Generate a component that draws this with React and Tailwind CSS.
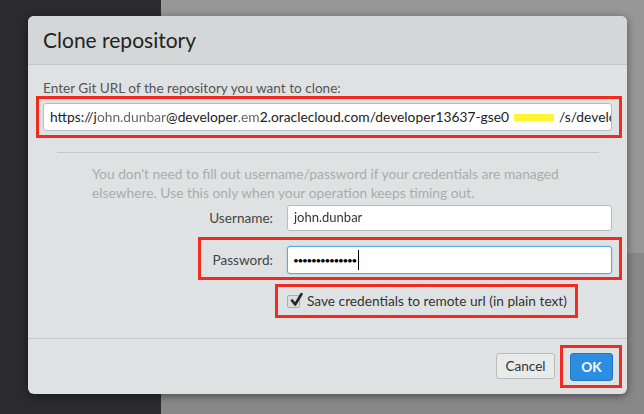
import React from 'react';

const red = 'border-[3px] border-[#f22b20]';

const CheckIcon = () => (
    <svg width="16" height="16" viewBox="0 0 16 16" className="absolute left-[1px] top-[-4px]">
        <path d="M3 8.5 L6.2 12.5 L12.5 2" fill="none" stroke="#262626" strokeWidth="2.6" strokeLinecap="round" strokeLinejoin="round" />
    </svg>
);

export default function App() {
    return (
        <div className="relative w-[644px] h-[414px] overflow-hidden flex text-[#333]" style={{ fontFamily: 'Lato, "Open Sans", sans-serif' }}>
            <div className="w-[161px] h-full bg-[#2b2b2d]" />
            <div className="flex-1 flex flex-col">
                <div className="h-[253px] bg-[#979797]" />
                <div className="flex-1 bg-[#888888]" />
            </div>

            <div className="absolute left-[28px] top-[16px] w-[599px] h-[378px] rounded-[6px] bg-[#dfe2e2] shadow-[0_2px_8px_rgba(0,0,0,0.45)] flex flex-col overflow-hidden">
                <div className="h-[49px] bg-[#d4d7d8] border-b border-[#c3c6c7] flex items-center pl-[15px] shrink-0">
                    <h1 className="text-[21px] text-[#222] leading-none mt-[-1px]">Clone repository</h1>
                </div>

                <div className="flex-1 flex flex-col">
                    <div className="ml-[15px] mt-[16px] h-[15px] text-[13.6px] leading-[15px] text-[#555] whitespace-nowrap">
                        Enter Git URL of the repository you want to clone:
                    </div>
                    <div className={`ml-[8px] w-[586px] h-[42px] ${red} pl-[4px] pt-[4px]`}>
                        <div className="w-[569px] h-[28px] bg-white border border-[#b9bcbd] rounded-[3px] flex items-center pl-[6px] overflow-hidden whitespace-nowrap text-[13.8px] text-[#222]">
                            <span className="shrink-0">https://j</span>
                            <span className="shrink-0 blur-[0.6px] text-[#666]">ohn.dunbar</span>
                            <span className="shrink-0">@developer</span>
                            <span className="shrink-0 blur-[0.6px] text-[#666]">.em</span>
                            <span className="shrink-0">2.oraclecloud.com/developer136</span>
                            <span className="shrink-0 blur-[0.5px]">37</span>
                            <span className="shrink-0">-gse0</span>
                            <span className="shrink-0 inline-block w-[40px] h-[7px] bg-[#fff631] ml-[5px] mr-[5px]" />
                            <span className="shrink-0">/s/developer13637</span>
                        </div>
                    </div>

                    <div className="ml-[29px] w-[542px] h-px bg-[#c4c7c8] mt-[14px]" />

                    <p className="ml-[64px] mt-[11px] w-[490px] text-[13.8px] leading-[19px] text-[#aaacac]">
                        You don't need to fill out username/password if your credentials are managed elsewhere. Use this only when your operation keeps timing out.
                    </p>

                    <div className="flex items-center mt-[3px]">
                        <label className="w-[245px] text-right text-[13.6px] text-[#444]">Username:</label>
                        <div className="ml-[14px] w-[325px] h-[26px] bg-white border border-[#b9bcbd] rounded-[3px] flex items-center pl-[6px] text-[13px] text-[#333]">
                            <span className="blur-[0.5px]">john.dunbar</span>
                        </div>
                    </div>

                    <div className={`ml-[170px] mt-[6px] w-[424px] h-[43px] ${red} flex items-start pt-[6px]`}>
                        <label className="w-[72px] text-right text-[13.6px] text-[#444] leading-[28px]">Password:</label>
                        <div className="ml-[14px] w-[325px] h-[28px] bg-white border border-[#5aa7e6] rounded-[3px] shadow-[0_0_2px_#8cc3f0] flex items-center pl-[5px]">
                            <span className="text-[10px] tracking-[-1.3px] text-black leading-none">••••••••••••••</span>
                            <span className="w-px h-[20px] bg-black ml-[2px]" />
                        </div>
                    </div>

                    <div className={`ml-[247px] mt-[4px] w-[303px] h-[34px] ${red} flex items-center pl-[9px]`}>
                        <span className="relative w-[13px] h-[13px] border border-[#a9acad] rounded-[2px] bg-[#dcdfe0] shrink-0">
                            <CheckIcon />
                        </span>
                        <span className="ml-[7px] text-[13.7px] text-[#333] whitespace-nowrap">Save credentials to remote url (in plain text)</span>
                    </div>
                </div>

                <div className="h-[56px] shrink-0 border-t border-[#c4c7c8] flex justify-end items-start pt-[6px] pr-[5px]">
                    <button className="mt-[8px] w-[59px] h-[26px] bg-[#e9ebeb] border border-[#b9bcbd] rounded-[3px] text-[13.6px] text-[#333]">
                        Cancel
                    </button>
                    <div className={`ml-[5px] w-[62px] h-[43px] ${red} pl-[7px] pt-[5px]`}>
                        <button className="w-[43px] h-[28px] bg-[#2b8ee0] border border-[#2277c2] rounded-[3px] text-[13.6px] font-bold text-white">
                            OK
                        </button>
                    </div>
                </div>
            </div>
        </div>
    );
}
